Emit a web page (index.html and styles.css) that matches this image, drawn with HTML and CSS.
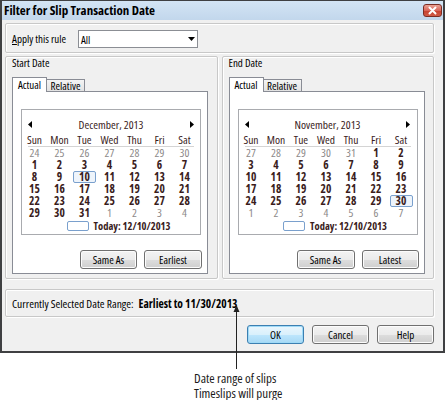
FILE: index.html
```html
<!DOCTYPE html>
<html>
<head>
<meta charset="utf-8">
<title>Filter for Slip Transaction Date</title>
<link rel="stylesheet" href="styles.css">
</head>
<body>
<div class="stage">
  <div class="window">
    <div class="titlebar">
      <div class="title">Filter for Slip Transaction Date</div>
      <div class="close">
        <svg width="17" height="11" viewBox="0 0 17 11"><path d="M5.5 2.5 L11.5 8.5 M11.5 2.5 L5.5 8.5" stroke="#fff" stroke-width="2" stroke-linecap="round"/></svg>
      </div>
    </div>
    <div class="content">
      <div class="group apply">
        <div class="apply-label"><span class="u">A</span>pply this rule</div>
        <div class="select">
          <span>All</span>
          <svg width="7" height="4" viewBox="0 0 7 4"><path d="M0 0 H7 L3.5 4 Z" fill="#000"/></svg>
        </div>
      </div>

      <div class="dates">
        <div class="group dgroup">
          <div class="dlabel">Start Date</div>
          <div class="tabs">
            <div class="tab active tab-a">Actual</div>
            <div class="tab tab-r">Relative</div>
          </div>
          <div class="panel">
            <div class="cal">
              <div class="cal-head">
                <svg width="4" height="7" viewBox="0 0 4 7"><path d="M4 0 V7 L0 3.5 Z" fill="#000"/></svg>
                <span>December, 2013</span>
                <svg width="4" height="7" viewBox="0 0 4 7"><path d="M0 0 V7 L4 3.5 Z" fill="#000"/></svg>
              </div>
              <div class="dow"><span>Sun</span><span>Mon</span><span>Tue</span><span>Wed</span><span>Thu</span><span>Fri</span><span>Sat</span></div>
              <div class="sep"></div>
              <div class="weeks">
                <span class="o">24</span><span class="o">25</span><span class="o">26</span><span class="o">27</span><span class="o">28</span><span class="o">29</span><span class="o">30</span>
                <span>1</span><span>2</span><span>3</span><span>4</span><span>5</span><span>6</span><span>7</span>
                <span>8</span><span>9</span><span class="sel">10</span><span>11</span><span>12</span><span>13</span><span>14</span>
                <span>15</span><span>16</span><span>17</span><span>18</span><span>19</span><span>20</span><span>21</span>
                <span>22</span><span>23</span><span>24</span><span>25</span><span>26</span><span>27</span><span>28</span>
                <span>29</span><span>30</span><span>31</span><span class="o">1</span><span class="o">2</span><span class="o">3</span><span class="o">4</span>
              </div>
              <div class="today"><span class="today-box"></span><span>Today: 12/10/2013</span></div>
            </div>
            <div class="panel-btns">
              <div class="btn w57">Same As</div>
              <div class="btn w58">Earliest</div>
            </div>
          </div>
        </div>

        <div class="group dgroup">
          <div class="dlabel">End Date</div>
          <div class="tabs">
            <div class="tab active tab-a">Actual</div>
            <div class="tab tab-r">Relative</div>
          </div>
          <div class="panel">
            <div class="cal">
              <div class="cal-head">
                <svg width="4" height="7" viewBox="0 0 4 7"><path d="M4 0 V7 L0 3.5 Z" fill="#000"/></svg>
                <span>November, 2013</span>
                <svg width="4" height="7" viewBox="0 0 4 7"><path d="M0 0 V7 L4 3.5 Z" fill="#000"/></svg>
              </div>
              <div class="dow"><span>Sun</span><span>Mon</span><span>Tue</span><span>Wed</span><span>Thu</span><span>Fri</span><span>Sat</span></div>
              <div class="sep"></div>
              <div class="weeks">
                <span class="o">27</span><span class="o">28</span><span class="o">29</span><span class="o">30</span><span class="o">31</span><span>1</span><span>2</span>
                <span>3</span><span>4</span><span>5</span><span>6</span><span>7</span><span>8</span><span>9</span>
                <span>10</span><span>11</span><span>12</span><span>13</span><span>14</span><span>15</span><span>16</span>
                <span>17</span><span>18</span><span>19</span><span>20</span><span>21</span><span>22</span><span>23</span>
                <span>24</span><span>25</span><span>26</span><span>27</span><span>28</span><span>29</span><span class="sel">30</span>
                <span class="o">1</span><span class="o">2</span><span class="o">3</span><span class="o">4</span><span class="o">5</span><span class="o">6</span><span class="o">7</span>
              </div>
              <div class="today"><span class="today-box"></span><span>Today: 12/10/2013</span></div>
            </div>
            <div class="panel-btns">
              <div class="btn w58">Same As</div>
              <div class="btn w57">Latest</div>
            </div>
          </div>
        </div>
      </div>

      <div class="group range">
        <span class="range-label">Currently Selected Date Range:</span>
        <b class="range-val">Earliest to 11/30/2013</b>
      </div>

      <div class="footer">
        <div class="btn w57 default">OK</div>
        <div class="btn w57">Cancel</div>
        <div class="btn w57">Help</div>
      </div>
    </div>
  </div>

  <svg class="pointer" width="7" height="64" viewBox="0 0 7 64"><path d="M3.5 0 L6.5 7 H0.5 Z" fill="#222"/><path d="M3.5 5 V64" stroke="#222" stroke-width="1"/></svg>

  <div class="note">
    <div>Date range of slips</div>
    <div>Timeslips will purge</div>
  </div>
</div>
</body>
</html>
```
FILE: styles.css
```css
* { box-sizing: border-box; }

body {
  margin: 0;
  background: #fff;
  font-family: "Open Sans", "Liberation Sans", sans-serif;
  font-stretch: 75%;
  font-size: 11px;
  color: #000;
}

.stage {
  position: relative;
  width: 445px;
  height: 400px;
}

.window {
  width: 445px;
  height: 353px;
  border: 2px solid #3f4042;
  border-top-width: 1px;
  background: #f0f0f0;
  display: flex;
  flex-direction: column;
}

.titlebar {
  height: 19px;
  flex: 0 0 19px;
  background: linear-gradient(#d3e4f4, #c2d7ec);
  display: flex;
  justify-content: space-between;
  align-items: flex-start;
  padding-left: 2px;
}

.title {
  font-weight: bold;
  font-size: 13px;
  line-height: 19px;
  white-space: nowrap;
}

.close {
  width: 19px;
  height: 13px;
  margin-top: 3px;
  margin-right: 1px;
  border: 1px solid #7b2d24;
  border-radius: 3px;
  background: linear-gradient(#eba294 0%, #d9665a 50%, #c6412f 51%, #d05a45 100%);
  display: flex;
}

.content {
  flex: 1;
  padding: 3px 9px 7px 3px;
  display: flex;
  flex-direction: column;
}

.group {
  border: 1px solid #c8c8c8;
  border-radius: 2px;
  box-shadow: inset 1px 1px 0 #fff, 1px 1px 0 #fff;
}

.apply {
  height: 30px;
  flex: 0 0 30px;
  padding: 6px 6px 0 6px;
  display: flex;
  align-items: flex-start;
}

.apply-label {
  flex: 0 0 66px;
  line-height: 18px;
  white-space: nowrap;
}

.u { text-decoration: underline; }

.select {
  width: 120px;
  height: 18px;
  border: 1px solid #8b8e94;
  background: #fff;
  display: flex;
  align-items: center;
  justify-content: space-between;
  padding: 0 2px 0 2px;
}

.dates {
  display: flex;
  gap: 4px;
  margin-top: 3px;
  height: 223px;
  flex: 0 0 223px;
}

.dgroup {
  flex: 1;
  padding: 0 0 0 6px;
  display: flex;
  flex-direction: column;
}

.dlabel {
  line-height: 12px;
}

.tabs {
  display: flex;
  align-items: flex-end;
  margin-top: 8px;
  height: 14px;
}

.tab {
  height: 12px;
  border: 1px solid #898c95;
  border-bottom: 0;
  line-height: 11px;
  text-align: center;
  background: linear-gradient(#f4f4f4, #e2e2e2);
  margin-left: -1px;
}

.tab.active {
  height: 15px;
  line-height: 14px;
  background: #fff;
  position: relative;
  z-index: 1;
  margin-bottom: -1px;
  margin-left: 0;
}

.tab-a { width: 35px; }
.tab-r { width: 39px; }

.panel {
  width: 196px;
  height: 183px;
  border: 1px solid #898c95;
  background: #fff;
  padding: 17px 0 4px 8px;
}

.cal {
  width: 180px;
  border: 1px solid #a9abaf;
  padding: 7px 0 2px 0;
  color: #3a1c1c;
}

.cal-head {
  display: flex;
  justify-content: space-between;
  align-items: center;
  height: 14px;
  padding: 0 6px;
  font-size: 11.5px;
}

.dow {
  display: grid;
  grid-template-columns: repeat(7, 25px);
  margin-top: 3px;
  line-height: 12px;
  text-align: center;
  font-size: 11.5px;
}

.sep {
  height: 1px;
  background: #d4d4d4;
  margin: 0 6px;
}

.weeks {
  display: grid;
  grid-template-columns: repeat(7, 25px);
  grid-auto-rows: 12px;
  text-align: center;
  font-weight: bold;
  font-size: 11.5px;
}

.weeks > span {
  line-height: 12px;
}

.weeks > span.o {
  color: #8c8888;
  font-weight: normal;
}

.weeks > span.sel {
  border: 1px solid #7aa0cd;
  border-radius: 2px;
  background: #eef4fb;
  margin: 0 1px;
  line-height: 10px;
}

.today {
  display: flex;
  align-items: center;
  justify-content: center;
  gap: 5px;
  height: 12px;
  margin-top: 1px;
  padding-left: 15px;
  font-weight: bold;
  font-size: 10.5px;
}

.today-box {
  width: 22px;
  height: 10px;
  border: 1px solid #7aa0cd;
  border-radius: 2px;
}

.panel-btns {
  display: flex;
  justify-content: flex-end;
  gap: 7px;
  margin-top: 15px;
  padding-right: 5px;
}

.btn {
  height: 19px;
  border: 1px solid #707070;
  border-radius: 3px;
  background: linear-gradient(#f3f3f3 0%, #ebebeb 50%, #dddddd 51%, #cfcfcf 100%);
  box-shadow: inset 0 0 0 1px #fcfcfc;
  display: flex;
  align-items: center;
  justify-content: center;
}

.w57 { width: 57px; }
.w58 { width: 58px; }

.btn.default {
  border-color: #3c7fb1;
  box-shadow: inset 0 0 0 1px #9fdaf7;
  background: linear-gradient(#eaf6fd 0%, #d9f0fc 50%, #bee6fd 51%, #a7d9f5 100%);
}

.range {
  margin-top: 10px;
  height: 28px;
  flex: 0 0 28px;
  padding: 0 6px;
  display: flex;
  align-items: center;
}

.range-label {
  font-size: 11.5px;
}

.range-val {
  margin-left: 5px;
  font-size: 11.5px;
}

.footer {
  display: flex;
  justify-content: flex-end;
  gap: 8px;
  margin-top: 8px;
}

.pointer {
  position: absolute;
  left: 233px;
  top: 305px;
}

.note {
  margin: 19px 0 0 194px;
  font-size: 13px;
  font-stretch: 82%;
  line-height: 13px;
  color: #1a1a1a;
}

.note div + div {
  margin-top: 2px;
}
```
